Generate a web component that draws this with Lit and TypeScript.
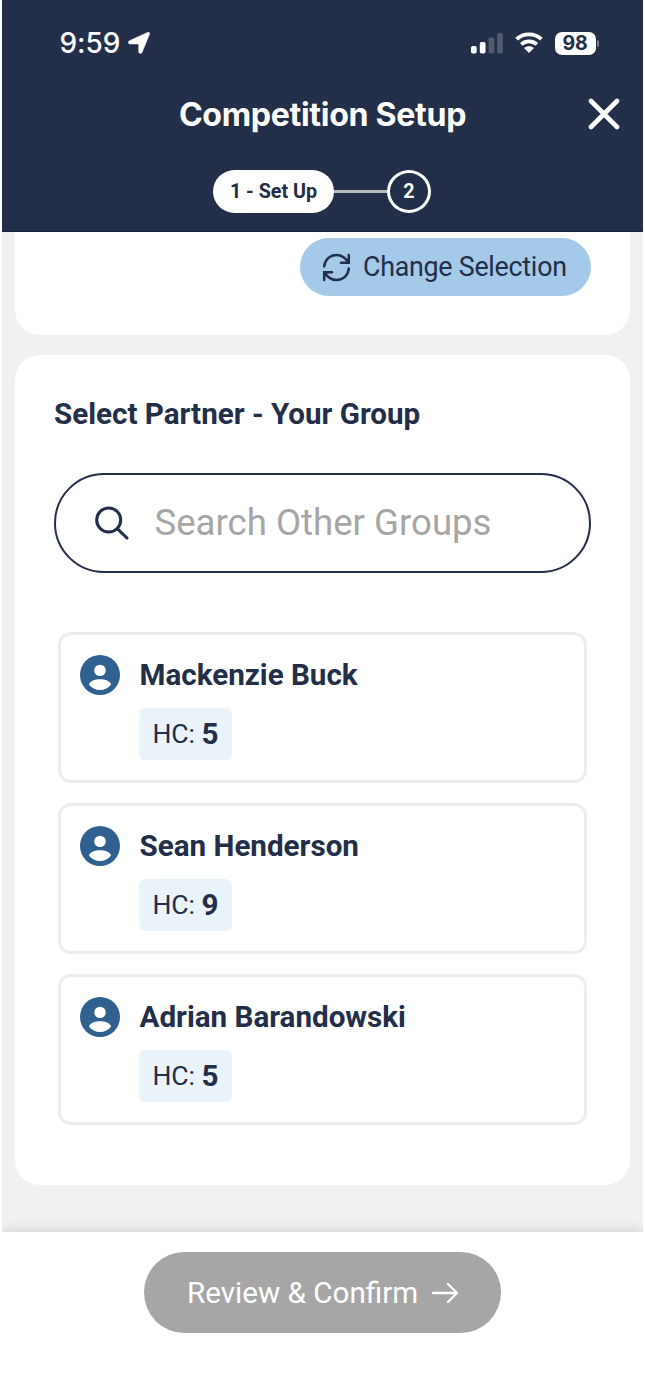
import { LitElement, html, css, svg } from "lit";
import { customElement, property } from "lit/decorators.js";

@customElement("player-card")
class PlayerCard extends LitElement {
  @property() name = "";
  @property({ type: Number }) hc = 0;

  static styles = css`
    :host {
      display: block;
      box-sizing: border-box;
      height: 151px;
      border: 3px solid #ededed;
      border-radius: 13px;
      padding: 20px 19px 0;
      color: #232e49;
    }
    .head { display: flex; align-items: center; gap: 20px; height: 40px; }
    .avatar { width: 40px; height: 40px; flex: none; }
    .name { font-size: 29.6px; font-weight: 700; line-height: 40px; white-space: nowrap; }
    .badge {
      display: flex;
      align-items: center;
      box-sizing: border-box;
      width: 93px;
      height: 52px;
      margin: 13px 0 0 59.5px;
      padding-left: 13.5px;
      border-radius: 6px;
      background: #ebf3fa;
      font-size: 26.6px;
      letter-spacing: -0.1px;
      white-space: pre;
    }
    .label { padding-bottom: 1px; }
    .value { font-size: 29.6px; font-weight: 700; }
  `;

  render() {
    return html`
      <div class="head">
        <svg class="avatar" viewBox="0 0 40 40">
          <circle cx="20" cy="20" r="20" fill="#2f608f" />
          <circle cx="20" cy="15.4" r="5.7" fill="#fff" />
          <path d="M8.8 29.2C11 25.6 15.5 24.3 20 24.3S29 25.6 31.2 29.2C28.6 33 24.5 35 20 35S11.4 33 8.8 29.2Z" fill="#fff" />
        </svg>
        <span class="name">${this.name}</span>
      </div>
      <div class="badge"><span class="label">HC: </span><span class="value">${this.hc}</span></div>
    `;
  }
}

@customElement("app-root")
class AppRoot extends LitElement {
  private players = [
    { name: "Mackenzie Buck", hc: 5 },
    { name: "Sean Henderson", hc: 9 },
    { name: "Adrian Barandowski", hc: 5 },
  ];

  static styles = css`
    :host {
      display: block;
      box-sizing: border-box;
      height: 1389px;
      overflow: hidden;
      padding: 0 2px;
      background: #fff;
      color: #232e49;
      font-family: Roboto, sans-serif;
    }
    .screen { display: flex; flex-direction: column; height: 1389px; }
    .header {
      box-sizing: border-box;
      height: 232px;
      flex: none;
      background: #232e49;
      border-bottom: 1px solid #17213d;
      color: #fff;
    }
    .status {
      display: flex;
      align-items: center;
      height: 36px;
      padding: 25px 44px 0 57.5px;
      font-family: Inter, sans-serif;
    }
    .time { font-size: 28px; font-weight: 500; line-height: 36px; width: 68px; letter-spacing: -0.1px; }
    .location { width: 22px; height: 22px; }
    .signals { display: flex; align-items: center; margin-left: auto; }
    .bars { width: 32px; height: 22px; margin-right: 12px; }
    .wifi { width: 28px; height: 22px; margin-right: 12px; }
    .battery {
      display: flex;
      align-items: center;
      justify-content: center;
      width: 41px;
      height: 23px;
      border-radius: 7px;
      background: #fff;
      color: #232e49;
      font-size: 19.5px;
      font-weight: 700;
      letter-spacing: -0.3px;
    }
    .cap { width: 2px; height: 7px; margin-left: 1.5px; border-radius: 0 3px 3px 0; background: #7b8292; }
    .titlebar {
      display: grid;
      grid-template-columns: 60px 1fr 60px;
      align-items: center;
      height: 60px;
      margin-top: 23px;
      padding: 0 9px;
      font-family: Inter, sans-serif;
    }
    .title { margin: 0; text-align: center; font-size: 32.2px; font-weight: 700; letter-spacing: -0.35px; white-space: nowrap; }
    .close { width: 32px; height: 32px; justify-self: center; }
    .steps { display: flex; align-items: center; justify-content: center; height: 44px; margin: 25px 1px 0 0; font-size: 19.7px; font-weight: 700; }
    .current {
      display: flex; align-items: center; justify-content: center;
      width: 121px; height: 43px; border-radius: 22px; background: #fff; color: #232e49; white-space: nowrap;
    }
    .line { width: 53px; height: 3px; background: #b9bbba; }
    .next {
      display: flex; align-items: center; justify-content: center; box-sizing: border-box;
      width: 44px; height: 43px; border: 3px solid #fff; border-radius: 50%;
    }
    .content { height: 1000px; flex: none; box-sizing: border-box; padding: 0 13px; background: #f1f1f1; }
    .selection {
      display: flex; justify-content: flex-end; align-items: flex-start; box-sizing: border-box;
      height: 103px; padding: 6px 39px 0; border-radius: 0 0 25px 25px; background: #fff;
    }
    .change {
      display: flex; align-items: center; box-sizing: border-box;
      width: 291px; height: 58px; padding-left: 22px; gap: 12px;
      border-radius: 29px; background: #a4c9e9; font-size: 26.8px; letter-spacing: -0.25px; line-height: 32px; white-space: nowrap;
    }
    .change span { padding-bottom: 1px; }
    .refresh { width: 29px; height: 29px; flex: none; }
    .partner { box-sizing: border-box; height: 830px; margin-top: 20px; padding: 40px 39px 0; border-radius: 25px; background: #fff; }
    .heading { margin: 0; font-size: 29.6px; font-weight: 700; line-height: 39px; white-space: nowrap; }
    .search {
      display: flex; align-items: center; box-sizing: border-box; height: 100px; margin-top: 39px;
      padding-left: 38px; border: 2px solid #232e49; border-radius: 50px;
      color: #a6a6a6; font-size: 36.6px; white-space: nowrap;
    }
    .search span { padding-bottom: 1px; }
    .magnifier { width: 36px; height: 36px; flex: none; margin-right: 24.5px; }
    .players { display: flex; flex-direction: column; gap: 20px; padding: 0 4px 0 3.5px; margin-top: 59px; }
    .footer {
      display: flex; justify-content: center; align-items: flex-start; flex: 1; padding-top: 20px;
      background: #fff; box-shadow: 0 -2px 12px rgba(0, 0, 0, 0.13); clip-path: inset(-20px 0 0 0);
    }
    .confirm {
      display: flex; align-items: center; box-sizing: border-box; width: 357px; height: 81px;
      padding-left: 43px; border-radius: 41px; background: #a6a6a6; color: #fff; font-size: 29.6px; white-space: nowrap;
    }
    .arrow { width: 28px; height: 22px; margin-left: 12.5px; flex: none; }
  `;

  render() {
    return html`
      <div class="screen">
        <header class="header">
          <div class="status">
            <span class="time">9:59</span>
            <svg class="location" viewBox="0 0 22 22"><path d="M1.4 8.8 19.5 .4C21 -.1 22 .8 21.5 2.3L14 20.5C13.3 22 10.7 21.7 10.7 19.8V12H2C-.1 11.9 -.4 9.7 1.4 8.8Z" fill="#fff" stroke="#fff" stroke-width=".5" /></svg>
            <div class="signals">
              <svg class="bars" viewBox="0 0 32 22">
                ${[[0, 14], [8.8, 10], [17.6, 5.5], [26.2, 1]].map(([x, y], i) =>
                  svg`<rect x=${x} y=${y} width="5.7" height=${21.5 - y} rx="1.7" fill=${i < 2 ? "#fff" : "#525b70"} />`)}
              </svg>
              <svg class="wifi" viewBox="0 0 28 22">
                <path d="M1.6 7.2C8.6 .7 19.4 .7 26.4 7.2" fill="none" stroke="#fff" stroke-width="3.8" />
                <path d="M6.2 12.3C10.7 8.3 17.3 8.3 21.8 12.3" fill="none" stroke="#fff" stroke-width="3.8" />
                <path d="M9 16C12 13.5 16 13.5 19 16L14 21Z" fill="#fff" />
              </svg>
              <span class="battery">98</span><span class="cap"></span>
            </div>
          </div>
          <div class="titlebar">
            <span></span>
            <h1 class="title">Competition Setup</h1>
            <svg class="close" viewBox="0 0 32 32"><path d="M3 3 29 29M29 3 3 29" stroke="#fff" stroke-width="4.6" stroke-linecap="round" /></svg>
          </div>
          <div class="steps">
            <span class="current">1 - Set Up</span><span class="line"></span><span class="next">2</span>
          </div>
        </header>
        <main class="content">
          <section class="selection">
            <div class="change">
              <svg class="refresh" viewBox="0 0 29 29" fill="none" stroke="#232e49" stroke-width="2.5" stroke-linecap="round" stroke-linejoin="miter">
                <path d="M2.2 13.5C2.8 6.5 8 2 14.5 2C19.5 2 23.5 5 26.3 9.3M26.8 2V9.7H19" />
                <path d="M26.8 15.5C26.2 22.5 21 27 14.5 27C9.5 27 5.5 24 2.7 19.7M2.2 27V19.3H10" />
              </svg>
              <span>Change Selection</span>
            </div>
          </section>
          <section class="partner">
            <h2 class="heading">Select Partner - Your Group</h2>
            <div class="search">
              <svg class="magnifier" viewBox="0 0 36 36" fill="none" stroke="#232e49" stroke-width="3.1" stroke-linecap="round">
                <circle cx="14.7" cy="15" r="12" /><path d="M23.5 23.8 33 33" />
              </svg>
              <span>Search Other Groups</span>
            </div>
            <div class="players">
              ${this.players.map((p) => html`<player-card .name=${p.name} .hc=${p.hc}></player-card>`)}
            </div>
          </section>
        </main>
        <footer class="footer">
          <div class="confirm">
            <span>Review &amp; Confirm</span>
            <svg class="arrow" viewBox="0 0 28 22" fill="none" stroke="#fff" stroke-width="2.3" stroke-linecap="round" stroke-linejoin="round"><path d="M2 11H26M17 2 26 11 17 20" /></svg>
          </div>
        </footer>
      </div>
    `;
  }
}
